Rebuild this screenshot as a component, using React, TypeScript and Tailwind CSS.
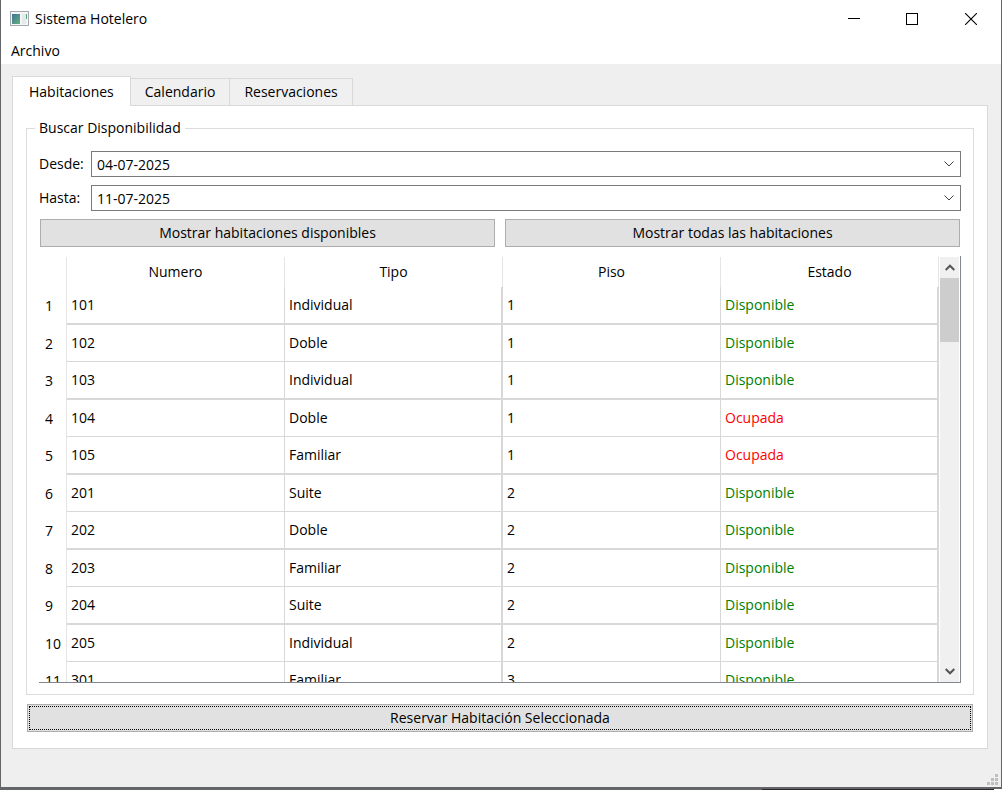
import { useState } from "react";

const TABS = ["Habitaciones", "Calendario", "Reservaciones"];

const COLUMNS = ["Numero", "Tipo", "Piso", "Estado"];

const ROOMS = [
  { numero: "101", tipo: "Individual", piso: 1, estado: "Disponible" },
  { numero: "102", tipo: "Doble", piso: 1, estado: "Disponible" },
  { numero: "103", tipo: "Individual", piso: 1, estado: "Disponible" },
  { numero: "104", tipo: "Doble", piso: 1, estado: "Ocupada" },
  { numero: "105", tipo: "Familiar", piso: 1, estado: "Ocupada" },
  { numero: "201", tipo: "Suite", piso: 2, estado: "Disponible" },
  { numero: "202", tipo: "Doble", piso: 2, estado: "Disponible" },
  { numero: "203", tipo: "Familiar", piso: 2, estado: "Disponible" },
  { numero: "204", tipo: "Suite", piso: 2, estado: "Disponible" },
  { numero: "205", tipo: "Individual", piso: 2, estado: "Disponible" },
  { numero: "301", tipo: "Familiar", piso: 3, estado: "Disponible" },
];

function AppIcon() {
  return (
    <svg width="19" height="16" viewBox="0 0 19 16" shapeRendering="crispEdges" aria-hidden="true">
      <defs>
        <linearGradient id="pane" x1="0" y1="0" x2="1" y2="1">
          <stop offset="0" stopColor="#3f7396" />
          <stop offset="1" stopColor="#62b17c" />
        </linearGradient>
      </defs>
      <rect x="0" y="0" width="19" height="15" fill="#a3a9ae" />
      <rect x="1" y="1" width="17" height="13" fill="#f3f5f6" />
      <rect x="2" y="3" width="8" height="10" fill="url(#pane)" />
      <rect x="12" y="3" width="4" height="10" fill="#e6e9ea" />
      <rect x="16" y="3" width="1" height="5" fill="#5ba488" />
    </svg>
  );
}

function TitleBar() {
  return (
    <header className="flex h-[37px] shrink-0 items-center bg-white pl-[9px]">
      <AppIcon />
      <h1 className="ml-[6px] flex-1">Sistema Hotelero</h1>
      <div className="flex">
        <button type="button" aria-label="Minimizar" className="flex h-9 w-[58px] items-center justify-center">
          <svg width="12" height="12" viewBox="0 0 12 12" shapeRendering="crispEdges">
            <path d="M0 5.5h12" stroke="#000" />
          </svg>
        </button>
        <button type="button" aria-label="Maximizar" className="flex h-9 w-[58px] items-center justify-center">
          <svg width="12" height="12" viewBox="0 0 12 12" shapeRendering="crispEdges">
            <rect x="0.5" y="0.5" width="11" height="11" fill="none" stroke="#000" />
          </svg>
        </button>
        <button type="button" aria-label="Cerrar" className="flex h-9 w-[60px] items-center justify-center">
          <svg width="12" height="12" viewBox="0 0 12 12">
            <path d="M0 0l12 12M12 0L0 12" stroke="#000" strokeWidth="1.1" />
          </svg>
        </button>
      </div>
    </header>
  );
}

function DateField({ id, label, initial }: { id: string; label: string; initial: string }) {
  const [value, setValue] = useState(initial);

  return (
    <div className="flex items-center">
      <label htmlFor={id} className="w-[52px] shrink-0">
        {label}
      </label>
      <div className="flex h-[26px] flex-1 items-center border border-[#7a7a7a] bg-white">
        <input
          id={id}
          value={value}
          onChange={(e) => setValue(e.target.value)}
          className="h-full min-w-0 flex-1 px-[5px] outline-none"
        />
        <button type="button" aria-label={`Abrir calendario ${label}`} className="flex h-full w-[22px] items-center justify-center">
          <svg width="10" height="6" viewBox="0 0 10 6" fill="none">
            <path d="M0.5 0.5L5 5L9.5 0.5" stroke="#444" />
          </svg>
        </button>
      </div>
    </div>
  );
}

function ActionButton({ children }: { children: string }) {
  return (
    <button type="button" className="h-7 flex-1 border border-[#adadad] bg-[#e1e1e1]">
      {children}
    </button>
  );
}

function RoomsTable() {
  return (
    <table className="w-full table-fixed border-separate border-spacing-0">
      <colgroup>
        <col className="w-7" />
        <col />
        <col />
        <col />
        <col />
      </colgroup>
      <thead>
        <tr className="h-[30px]">
          <td className="border-r border-[#e5e5e5]" />
          {COLUMNS.map((name) => (
            <th key={name} scope="col" className="border-r border-[#e5e5e5] p-0 font-normal">
              {name}
            </th>
          ))}
        </tr>
      </thead>
      <tbody>
        {ROOMS.map((room, i) => (
          <tr
            key={room.numero}
            className="h-[37px] odd:h-[38px] [&>td]:border-b [&>td]:border-r [&>td]:border-[#d8d8d8] [&>td]:px-1 [&>td]:py-0 odd:[&>td]:border-b-2"
          >
            <th scope="row" className="border-r border-[#e5e5e5] py-0 pl-[6px] text-left font-normal">
              {i + 1}
            </th>
            <td>{room.numero}</td>
            <td className="border-r-2!">{room.tipo}</td>
            <td>{room.piso}</td>
            <td className={`border-r-2! ${room.estado === "Disponible" ? "text-[#008000]" : "text-[#ff0000]"}`}>
              {room.estado}
            </td>
          </tr>
        ))}
      </tbody>
    </table>
  );
}

function ScrollBar() {
  return (
    <div className="mx-px mt-px flex w-[19px] shrink-0 flex-col bg-[#f0f0f0]">
      <button type="button" aria-label="Subir" className="flex h-[21px] items-center justify-center">
        <svg width="10" height="7" viewBox="0 0 10 7" fill="none">
          <path d="M0.7 6L5 1.7L9.3 6" stroke="#555" strokeWidth="2" />
        </svg>
      </button>
      <div className="flex-1">
        <div className="h-16 bg-[#cdcdcd]" />
      </div>
      <button type="button" aria-label="Bajar" className="flex h-[21px] items-center justify-center">
        <svg width="10" height="7" viewBox="0 0 10 7" fill="none">
          <path d="M0.7 1L5 5.3L9.3 1" stroke="#555" strokeWidth="2" />
        </svg>
      </button>
    </div>
  );
}

function SizeGrip() {
  return (
    <svg width="11" height="11" viewBox="0 0 11 11" fill="#bfbfbf" shapeRendering="crispEdges" aria-hidden="true">
      <path d="M8 0h3v3h-3zM4 4h3v3h-3zM8 4h3v3h-3zM0 8h3v3h-3zM4 8h3v3h-3zM8 8h3v3h-3z" />
    </svg>
  );
}

export default function App() {
  const [active, setActive] = useState(TABS[0]);

  return (
    <div className="flex h-screen flex-col bg-white font-['Open_Sans','Noto_Sans',sans-serif] text-[14px] leading-5 text-black">
      <div className="flex min-h-0 flex-1 flex-col border-x border-b-2 border-[#646569] bg-[#efefef]">
        <TitleBar />
        <nav className="flex h-[27px] shrink-0 items-center bg-white px-[10px]">
          <button type="button">Archivo</button>
        </nav>

        <main className="flex min-h-0 flex-1 flex-col pl-[11px] pr-[13px] pt-3">
          <div role="tablist" className="z-10 -mb-px flex items-end">
            {TABS.map((tab) => (
              <button
                key={tab}
                type="button"
                role="tab"
                aria-selected={tab === active}
                onClick={() => setActive(tab)}
                className={
                  tab === active
                    ? "h-[30px] border border-b-0 border-[#d9d9d9] bg-white px-4"
                    : "mb-px h-[27px] border border-l-0 border-b-0 border-[#d9d9d9] bg-[#f0f0f0] px-[14px]"
                }
              >
                {tab}
              </button>
            ))}
          </div>

          <section role="tabpanel" className="flex min-h-0 flex-1 flex-col gap-[9px] border border-[#d9d9d9] bg-white px-[13px] pb-4 pt-3">
            <fieldset className="flex min-h-0 min-w-0 flex-1 flex-col border border-[#dcdcdc] px-3 pb-[11px]">
              <legend className="-ml-1 px-1">Buscar Disponibilidad</legend>
              <div className="flex min-h-0 flex-1 flex-col gap-2 pt-[13px]">
                <DateField id="desde" label="Desde:" initial="04-07-2025" />
                <DateField id="hasta" label="Hasta:" initial="11-07-2025" />
                <div className="flex gap-[10px] px-px">
                  <ActionButton>Mostrar habitaciones disponibles</ActionButton>
                  <ActionButton>Mostrar todas las habitaciones</ActionButton>
                </div>
                <div className="mt-px flex min-h-0 flex-1 border-b border-r border-[#828790]">
                  <div className="min-w-0 flex-1 overflow-hidden pt-px">
                    <RoomsTable />
                  </div>
                  <ScrollBar />
                </div>
              </div>
            </fieldset>
            <button
              type="button"
              className="mx-px h-7 shrink-0 border border-[#adadad] bg-[#e1e1e1] outline-1 -outline-offset-3 outline-dotted outline-black"
            >
              Reservar Habitación Seleccionada
            </button>
          </section>
        </main>

        <footer className="flex h-[38px] shrink-0 items-end justify-end pb-[2px] pr-[3px]">
          <SizeGrip />
        </footer>
      </div>
      {/* sliver of desktop under the window */}
      <div className="flex h-px shrink-0 bg-[#646569]">
        <div className="ml-auto mr-2 w-[232px] bg-[#26262b]" />
        <div className="-ml-2 w-2 bg-white" />
      </div>
    </div>
  );
}
